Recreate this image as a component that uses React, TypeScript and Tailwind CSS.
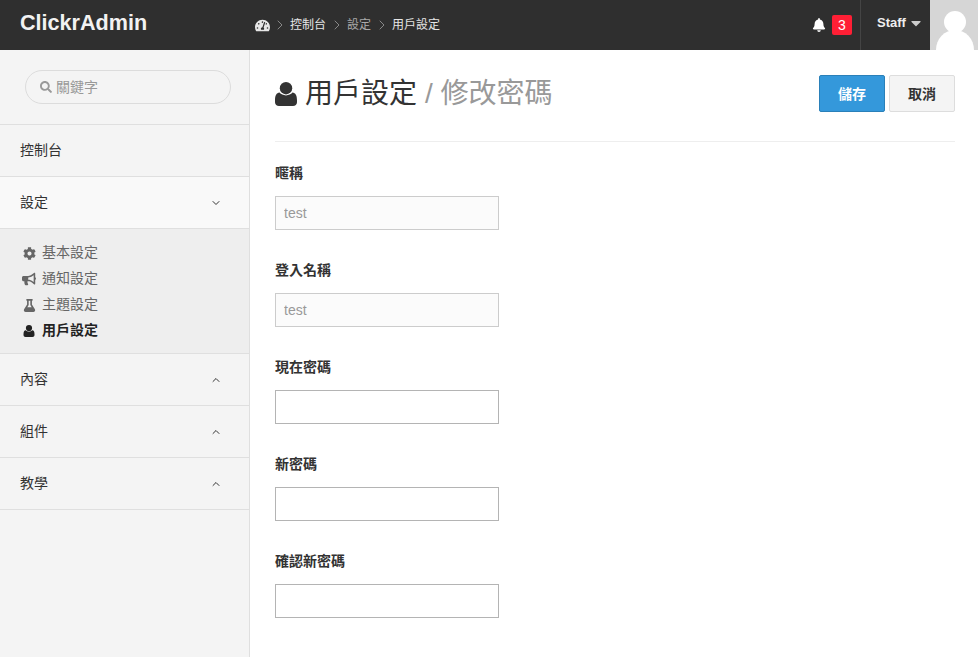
import { FaBell, FaBullhorn, FaCaretDown, FaCog, FaFlask, FaSearch, FaTachometerAlt } from "react-icons/fa";
import { LuChevronDown, LuChevronRight, LuChevronUp } from "react-icons/lu";
import type { ReactNode } from "react";

const font = "font-['Liberation_Sans','Noto_Sans_CJK_TC',sans-serif]";

// Font Awesome 4 style user glyph, wider than the one in the icon package
const UserIcon = ({ className }: { className?: string }) => (
  <svg viewBox="0 0 22 24" className={className} fill="currentColor">
    <circle cx="11" cy="6.2" r="6.2" />
    <path d="M4.5 10.6C6 12.3 8.3 13.4 11 13.4s5-1.100 6.500-2.800C20.500 11 22 13.500 22 18.500v1.700C22 22.600 20.300 24 18 24H4c-2.300 0-4-1.400-4-3.800v-1.700C0 13.500 1.500 11 4.500 10.600z" />
  </svg>
);

const NavItem = ({ label, open, chevron = true }: { label: string; open?: boolean; chevron?: boolean }) => (
  <div className={`flex h-[52px] items-center justify-between border-b border-[#dfdfdf] pr-[27px] pb-[2px] pl-5 text-sm text-[#333] ${open ? "bg-[#f9f9f9]" : ""}`}>
    <span>{label}</span>
    {chevron && (open ? <LuChevronDown className="mt-[2px] size-3" strokeWidth={2} /> : <LuChevronUp className="mt-[2px] size-3" strokeWidth={2} />)}
  </div>
);

const SubItem = ({ icon, label, active }: { icon: ReactNode; label: string; active?: boolean }) => (
  <div className={`flex h-[26px] items-center text-sm ${active ? "font-bold text-[#222]" : "text-[#666]"}`}>
    <span className="flex w-[22px] items-center justify-center pr-[4px] text-[13px]">{icon}</span>
    <span className="pb-[2px]">{label}</span>
  </div>
);

const FormField = ({ label, value, disabled }: { label: string; value?: string; disabled?: boolean }) => (
  <div className="mb-[30px]">
    <label className="mb-[13px] block h-[20px] text-sm leading-5 font-bold text-[#333]">{label}</label>
    <input
      readOnly
      value={value ?? ""}
      className={`block h-[34px] w-[224px] border px-2 text-sm outline-none ${disabled ? "border-[#ccc] bg-[#fbfbfb] text-[#999]" : "border-[#b4b4b4] bg-white"}`}
    />
  </div>
);

export default function App() {
  return (
    <div className={`flex h-[657px] w-[978px] flex-col overflow-hidden bg-white ${font}`}>
      <header className="flex h-[50px] shrink-0 items-center bg-[#2f2f2f] text-white">
        <div className="w-[255px] pb-[3px] pl-5 text-[21.6px] font-bold text-[#f2f2f2]">ClickrAdmin</div>
        <div className="flex items-center gap-[2.5px] text-xs text-[#e6e6e6]">
          <FaTachometerAlt className="mr-[-1px] size-[15px]" />
          <LuChevronRight className="size-4 text-[#888]" strokeWidth={1.5} />
          <span>控制台</span>
          <LuChevronRight className="size-4 text-[#888]" strokeWidth={1.5} />
          <span className="text-[#aaa]">設定</span>
          <LuChevronRight className="size-4 text-[#888]" strokeWidth={1.5} />
          <span>用戶設定</span>
        </div>
        <div className="ml-auto flex h-full items-center">
          <FaBell className="mr-[6px] size-[14px]" />
          <span className="mr-2 flex h-5 w-5 items-center justify-center rounded-[2px] bg-[#ff1f35] text-sm">3</span>
          <div className="flex h-full w-[70px] items-center gap-[2px] border-l border-[#444] pb-[4px] pl-4 text-[13px] font-bold text-[#eee]">
            Staff
            <FaCaretDown className="size-[16px] text-[#ccc]" />
          </div>
          <div className="h-full w-[48px] overflow-hidden bg-[#d6d6d6]">
            <svg viewBox="0 0 48 50" className="size-full" fill="#fff">
              <circle cx="25" cy="22" r="11" />
              <ellipse cx="25" cy="50" rx="19" ry="20" />
            </svg>
          </div>
        </div>
      </header>
      <div className="flex min-h-0 flex-1">
        <aside className="w-[250px] shrink-0 border-r border-[#dfdfdf] bg-[#f4f4f4]">
          <div className="h-[75px] border-b border-[#dfdfdf] px-[25px] pt-5">
            <div className="flex h-[34px] w-[206px] items-center gap-[4px] rounded-full border border-[#dcdcdc] pl-[14px] text-sm text-[#999]">
              <FaSearch className="size-[12px] text-[#999]" />
              關鍵字
            </div>
          </div>
          <NavItem label="控制台" chevron={false} />
          <NavItem label="設定" open />
          <div className="h-[125px] border-b border-[#dfdfdf] bg-[#eee] px-5 pt-[11px]">
            <SubItem icon={<FaCog />} label="基本設定" />
            <SubItem icon={<FaBullhorn className="size-[14px]" />} label="通知設定" />
            <SubItem icon={<FaFlask />} label="主題設定" />
            <SubItem icon={<UserIcon className="size-[12px]" />} label="用戶設定" active />
          </div>
          <NavItem label="內容" />
          <NavItem label="組件" />
          <NavItem label="教學" />
        </aside>
        <main className="min-w-0 flex-1 pr-[23px] pl-[25px]">
          <div className="flex h-[92px] items-start justify-between border-b border-[#eee] pt-[25px]">
            <h1 className="flex items-center pt-[2px] text-[28px] leading-[34px] font-normal text-[#333]">
              <UserIcon className="mr-2 h-[24px] w-[22px]" />
              用戶設定
              <span className="ml-2 text-[#999]">/ 修改密碼</span>
            </h1>
            <div className="flex gap-1">
              <button className="h-[37px] w-[66px] rounded-[2px] border border-[#2a80b9] bg-[#3498db] text-sm font-bold text-white">儲存</button>
              <button className="h-[37px] w-[66px] rounded-[2px] border border-[#ddd] bg-[#f4f4f4] text-sm font-bold text-[#333]">取消</button>
            </div>
          </div>
          <div className="pt-[21px]">
            <FormField label="暱稱" value="test" disabled />
            <FormField label="登入名稱" value="test" disabled />
            <FormField label="現在密碼" />
            <FormField label="新密碼" />
            <FormField label="確認新密碼" />
          </div>
        </main>
      </div>
    </div>
  );
}
